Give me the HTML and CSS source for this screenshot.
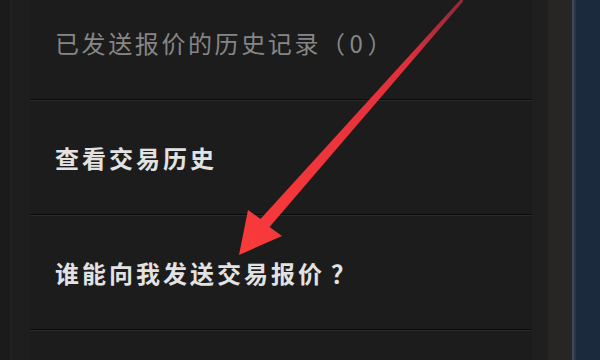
FILE: index.html
```html
<!DOCTYPE html>
<html lang="zh-CN">
<head>
<meta charset="utf-8">
<title>交易报价</title>
<link rel="stylesheet" href="styles.css">
</head>
<body>
<div class="page">
  <div class="edge-left"></div>
  <div class="panel">
    <div class="list">
      <div class="row row-first"><span class="label muted">已发送报价的历史记录（<span class="num">0</span>）</span></div>
      <div class="row"><span class="label">查看交易历史</span></div>
      <div class="row"><span class="label">谁能向我发送交易报价<span class="q">？</span></span></div>
      <div class="row"></div>
    </div>
  </div>
  <div class="gutter"></div>
  <div class="strip"></div>
  <div class="divider"></div>
  <div class="side"></div>
  <svg class="arrow" width="600" height="360" viewBox="0 0 600 360">
    <defs>
      <linearGradient id="ag" x1="462" y1="0" x2="240" y2="254" gradientUnits="userSpaceOnUse">
        <stop offset="0" stop-color="#8a2a38"/>
        <stop offset="0.25" stop-color="#e0303c"/>
        <stop offset="1" stop-color="#fb3a3a"/>
      </linearGradient>
    </defs>
    <polygon fill="url(#ag)" points="461,-1 463.5,1 269.5,227 282,236 239,255 248,210 260.5,219"/>
  </svg>
</div>
</body>
</html>
```

FILE: styles.css
```css
html, body {
  margin: 0;
  padding: 0;
  background: #1c2a3d;
}
.page {
  position: relative;
  width: 600px;
  height: 360px;
  overflow: hidden;
  display: flex;
  font-family: "Noto Sans CJK SC", "Noto Sans", sans-serif;
}
.edge-left {
  width: 30px;
  flex: none;
  background: linear-gradient(to right, #1b1b1b 0, #1b1b1b 10px, #222 10px, #222 12px, #1e1e1e 12px);
}
.panel {
  width: 502px;
  flex: none;
  background: #1c1c1c;
}
.list {
  margin-top: -14px;
}
.row {
  height: 113px;
  display: flex;
  align-items: center;
  padding-left: 25px;
  border-bottom: 1px solid #0b0b0b;
  box-shadow: 0 1px 0 #2a2a2a;
  margin-bottom: 1px;
}
.label {
  font-size: 24px;
  letter-spacing: 3px;
  font-weight: 600;
  color: #e2e2e2;
}
.label.muted {
  font-weight: 400;
  color: #868686;
  letter-spacing: 2.6px;
}
.num {
  margin: 0 2px;
}
.q {
  margin-left: 6px;
}
.gutter {
  width: 16px;
  flex: none;
  background: #1f1f1f;
}
.strip {
  width: 24px;
  flex: none;
  background: #282624;
}
.divider {
  width: 2px;
  flex: none;
  background: #3e4a57;
  border-right: 2px solid #2a3644;
}
.side {
  flex: 1;
  background: #1c2a3d;
}
.arrow {
  position: absolute;
  left: 0;
  top: 0;
  pointer-events: none;
}
```
